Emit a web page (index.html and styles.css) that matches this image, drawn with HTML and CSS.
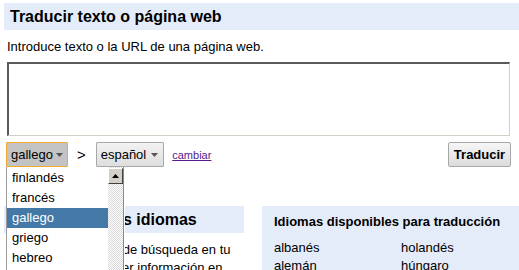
FILE: index.html
```html
<!DOCTYPE html>
<html lang="es">
<head>
  <meta charset="UTF-8">
  <title>Traducir texto o página web</title>
  <link rel="stylesheet" href="styles.css">
</head>
<body>
  <div class="page">
    <h2 class="bar-title">Traducir texto o página web</h2>
    <p class="intro">Introduce texto o la URL de una página web.</p>
    <textarea class="source"></textarea>
    <div class="controls">
      <div class="lang-from">
        <span class="select focused">gallego
          <svg class="caret" width="7" height="4" viewBox="0 0 7 4"><path d="M0 0h7L3.5 4z" fill="#555"/></svg>
        </span>
        <div class="dropdown">
          <ul class="options">
            <li>finlandés</li>
            <li>francés</li>
            <li class="selected">gallego</li>
            <li>griego</li>
            <li>hebreo</li>
          </ul>
          <div class="scrollbar">
            <span class="scroll-up">
              <svg width="7" height="4" viewBox="0 0 7 4"><path d="M0 4h7L3.5 0z" fill="#000"/></svg>
            </span>
          </div>
        </div>
      </div>
      <span class="to">&gt;</span>
      <span class="select">español
        <svg class="caret" width="7" height="4" viewBox="0 0 7 4"><path d="M0 0h7L3.5 4z" fill="#555"/></svg>
      </span>
      <a class="swap" href="#">cambiar</a>
      <button class="translate">Traducir</button>
    </div>
    <div class="boxes">
      <section class="box-search">
        <h2 class="bar-title">Buscar en otros idiomas</h2>
        <p>Escribe una frase de búsqueda en tu<br>idioma para obtener información en</p>
      </section>
      <section class="box-langs">
        <h3>Idiomas disponibles para traducción</h3>
        <div class="lang-cols">
          <ul>
            <li>albanés</li>
            <li>alemán</li>
          </ul>
          <ul>
            <li>holandés</li>
            <li>húngaro</li>
          </ul>
        </div>
      </section>
    </div>
  </div>
</body>
</html>
```

FILE: styles.css
```css
body {
  margin: 0;
  font-family: "Liberation Sans", Arial, sans-serif;
  font-size: 13px;
  color: #000;
  background: #fff;
  overflow: hidden;
}
.page {
  padding: 3px 0 0 4px;
  width: 515px;
  height: 267px;
  overflow: hidden;
}
.bar-title {
  margin: 0;
  height: 27px;
  line-height: 27px;
  padding-left: 6px;
  background: #e5ecf9;
  font-size: 16px;
  font-weight: bold;
}
.intro {
  margin: 9px 0 0 3px;
  line-height: 15px;
}
.source {
  display: block;
  box-sizing: border-box;
  margin: 8px 0 0 3px;
  width: 503px;
  height: 74px;
  padding: 2px;
  resize: none;
  border-style: solid;
  border-width: 2px 1px 1px 2px;
  border-color: #5a5a5a #d4d0c8 #d4d0c8 #5a5a5a;
  background: #fff;
}
.controls {
  display: flex;
  align-items: center;
  height: 25px;
  margin: 6px 8px 0 2px;
}
.lang-from {
  position: relative;
}
.select {
  display: flex;
  align-items: center;
  box-sizing: border-box;
  height: 25px;
  padding: 0 5px 0 4px;
  border: 1px solid #a8a8a8;
  border-radius: 1px;
  background: linear-gradient(#f2f2f2, #dedede);
  font-size: 13px;
  white-space: nowrap;
}
.select .caret {
  flex-shrink: 0;
  margin-left: 5px;
}
.select.focused {
  padding: 0 4px;
  border-color: #f0a92c;
  background: #c3c3c3;
}
.select.focused .caret {
  margin-left: 3px;
}
.to {
  margin: 0 10px 0 9px;
  font-size: 15px;
}
.swap {
  margin-left: 8px;
  font-size: 11px;
  color: #551a8b;
}
.translate {
  margin-left: auto;
  box-sizing: border-box;
  width: 63px;
  height: 25px;
  padding: 0;
  border: 1px solid #a8a8a8;
  border-radius: 2px;
  background: linear-gradient(#f6f6f6, #dcdcdc);
  font-family: "Liberation Sans", Arial, sans-serif;
  font-size: 13px;
  font-weight: bold;
  color: #000;
}

/* open list of the source language */
.dropdown {
  position: absolute;
  top: 25px;
  left: 0;
  z-index: 2;
  display: flex;
  width: 118px;
  height: 103px;
  border-left: 1px solid #9a9a9a;
  background: #fff;
}
.options {
  list-style: none;
  margin: 1px 0 0;
  padding: 0;
  width: 101px;
}
.options li {
  height: 20px;
  line-height: 20px;
  padding-left: 5px;
}
.options li.selected {
  background: #4479a7;
  color: #fff;
}
.scrollbar {
  width: 15px;
  border-right: 1px solid #8a8a8a;
  background: repeating-conic-gradient(#d9d9d9 0 25%, #fff 0 50%) 0 0 / 2px 2px;
}
.scroll-up {
  display: flex;
  align-items: center;
  justify-content: center;
  box-sizing: border-box;
  width: 15px;
  height: 16px;
  margin-top: 1px;
  border: 1px solid;
  border-color: #fff #404040 #404040 #fff;
  background: #d4d0c8;
}

.boxes {
  display: grid;
  grid-template-columns: 240px 1fr;
  column-gap: 18px;
  margin-top: 39px;
}
.box-search p {
  margin: 8px 0 0 14px;
  line-height: 18px;
}
.box-langs {
  height: 80px;
  padding: 8px 0 0 12px;
  background: #e5ecf9;
}
.box-langs h3 {
  margin: 0;
  font-size: 13px;
  line-height: 16px;
}
.lang-cols {
  display: flex;
  margin-top: 9px;
}
.lang-cols ul {
  list-style: none;
  margin: 0;
  padding: 0;
  width: 127px;
}
.lang-cols li {
  line-height: 18px;
}
```
